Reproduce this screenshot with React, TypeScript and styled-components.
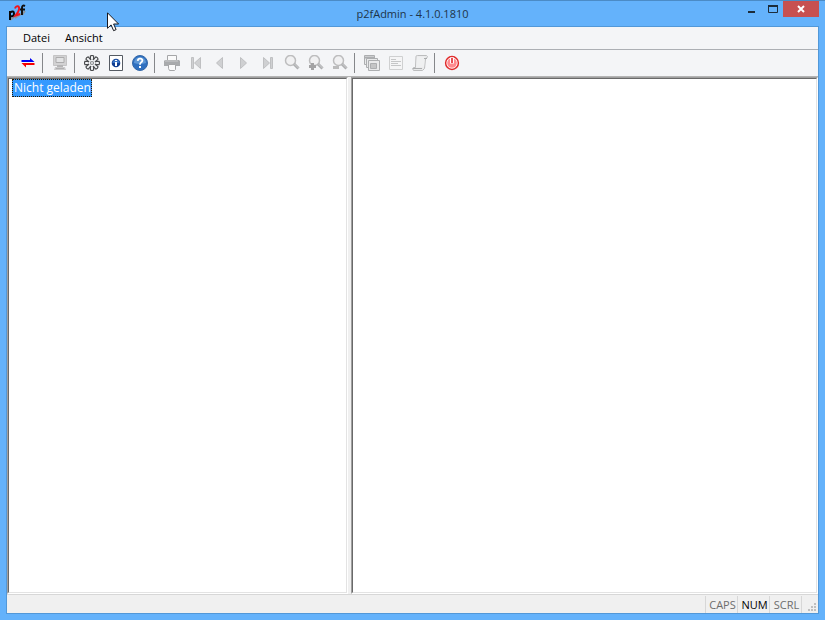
import React, { useState } from "react";
import styled, { createGlobalStyle } from "styled-components";

const GlobalStyle = createGlobalStyle`
  * { box-sizing: border-box; }
  html, body, #root { height: 100%; margin: 0; }
  body { font: 11px/16px "Open Sans", "Noto Sans", sans-serif; color: #000; overflow: hidden; }
  button { font: inherit; color: inherit; background: none; border: 0; padding: 0; margin: 0; }
  svg { display: block; }
`;

const Window = styled.div`
  height: 100vh;
  display: flex;
  flex-direction: column;
  background: #64b2fb;
  border-top: 1px solid #4b8bc6;
  padding: 0 6px 6px;
`;

const TitleBar = styled.header`
  flex: none;
  height: 25px;
  display: grid;
  grid-template-columns: 1fr auto 1fr;
  align-items: start;
`;

const Title = styled.h1`
  margin: 0;
  padding-top: 5px;
  font-size: 11px;
  line-height: 16px;
  font-weight: 400;
  color: #1e3448;
`;

const Logo = styled.svg`
  margin: 2px 0 0;
`;

const WindowButtons = styled.div`
  justify-self: end;
  display: flex;
`;

const WindowButton = styled.button<{ $close?: boolean }>`
  width: ${(p) => (p.$close ? 36 : 21)}px;
  height: 16px;
  display: grid;
  place-items: center;
  background: ${(p) => (p.$close ? "#c75050" : "transparent")};
`;

const Client = styled.main`
  flex: 1;
  min-height: 0;
  display: flex;
  flex-direction: column;
  background: #f4f5f7;
  border: 1px solid #5298d8;
`;

const MenuBar = styled.nav`
  flex: none;
  height: 23px;
  display: flex;
  align-items: center;
  padding: 0 8px;
  border-bottom: 1px solid #acafb4;
`;

const MenuItem = styled.button`
  padding: 0 7px 0 8px;
`;

const ToolBar = styled.div`
  flex: none;
  height: 26px;
  display: flex;
  align-items: center;
  padding: 0 9px;
`;

const ToolButton = styled.button`
  flex: none;
  width: 24px;
  height: 24px;
  display: grid;
  place-items: center;
`;

const Separator = styled.span`
  flex: none;
  width: 8px;
  height: 20px;
  &::before {
    content: "";
    display: block;
    width: 1px;
    height: 100%;
    margin-left: 2px;
    background: #85878a;
  }
`;

const Panes = styled.div`
  flex: 1;
  min-height: 0;
  display: grid;
  grid-template-columns: 341fr 467fr;
  column-gap: 3px;
  background: #f0f0f0;
  border-top: 1px solid #b4b4b4;
`;

const Pane = styled.section`
  min-width: 0;
  background: #fff;
  border: 1px solid;
  border-color: #a0a0a0 #fff #fff #a0a0a0;
`;

const PaneBody = styled.div`
  height: 100%;
  padding: 0 3px;
  border: 1px solid;
  border-color: #696969 #e3e3e3 #e3e3e3 #696969;
`;

const TreeItem = styled.button`
  display: block;
  height: 18px;
  padding: 0 0 0 1px;
  color: #fff;
  background: #3399ff;
  border: 1px dotted #2a1a00;
  font-size: 12px;
  line-height: 16px;
`;

const StatusBar = styled.footer`
  flex: none;
  height: 19px;
  display: flex;
  justify-content: flex-end;
  background: #f0f0f0;
  border-top: 1px solid #d7d7d7;
`;

const Indicator = styled.span<{ $on?: boolean }>`
  width: 32px;
  margin-top: 1px;
  padding: 1px 0 0 2px;
  border-left: 1px solid #d7d7d7;
  text-align: center;
  color: ${(p) => (p.$on ? "#000" : "#6d6d6d")};
`;

const Grip = styled.svg`
  border-left: 1px solid #d7d7d7;
  margin-top: 1px;
`;

const Pointer = styled.svg`
  position: absolute;
  left: 107px;
  top: 12px;
  pointer-events: none;
`;

const Magnifier = ({ mark }: { mark?: "plus" | "minus" }) => (
  <>
    <circle cx="6.5" cy="5.5" r="5" fill="#f1f1f2" stroke="#bdbdbe" strokeWidth="1.5" />
    <path d="M10 9l4.500 4.500" stroke="#adaeb0" strokeWidth="3" />
    <path d="M10.500 9l4 4" stroke="#cfcfd0" />
    {mark === "plus" && <path d="M1 11.500h7M4.500 8v7" stroke="#a3a3a4" strokeWidth="3" />}
    {mark === "minus" && <path d="M1 12.500h6" stroke="#bbb" strokeWidth="3" />}
  </>
);

const icons: Record<string, React.ReactNode> = {
  connect: (
    <>
      <path d="M1.500 5H10V3l4.500 4h-13z" fill="#0000f4" />
      <path d="M14.500 8h-13L6 12.500V10h8.500z" fill="#f40000" />
    </>
  ),
  computer: (
    <>
      <path d="M1.500 0.500h13v10h-13z" fill="#d2d2d3" stroke="#c4c4c5" />
      <path d="M4 2.500h8v5H4z" fill="#e2e3e4" stroke="#acacad" />
      <path d="M5 10h6v2H5z" fill="#b5b5b6" />
      <path d="M3 12h10l1 3H2z" fill="#cacacb" />
      <path d="M4 13.500h8" stroke="#b0b0b1" />
    </>
  ),
  gear: (
    <g fill="none" stroke="#4a4c4e" strokeWidth="1.200">
      {[0, 45, 90, 135, 180, 225, 270, 315].map((a) => (
        <path key={a} transform={`rotate(${a} 8 8)`} d="M6.900 5L6.400 3.600V1Q8 0 9.600 1V3.600L9.100 5" />
      ))}
      <circle cx="8" cy="8" r="1.500" stroke="#8a8c8e" />
    </g>
  ),
  info: (
    <>
      <path d="M1.500 0.500h13v15h-13z" fill="#fff" stroke="#555b63" />
      <circle cx="8" cy="8" r="4.300" fill="#123f91" />
      <path d="M4.500 8a3.500 3.500 0 0 1 7 0" fill="#3b75c5" />
      <path d="M7 5h2v1H7zM7 7h2v4H7z" fill="#fff" />
    </>
  ),
  help: (
    <>
      <circle cx="8" cy="8" r="7.500" fill="#2f70c0" stroke="#3468a8" />
      <path d="M2 8a6 6 0 0 1 12 0Q8 10 2 8" fill="#5f98d6" />
      <path d="M5.700 5.800Q6 3.500 8.200 3.600Q10.500 3.800 10.400 5.700Q10.200 6.800 8.800 7.600Q8 8.200 8 9.700" fill="none" stroke="#fff" strokeWidth="1.800" />
      <path d="M7 11h2v2H7z" fill="#fff" />
    </>
  ),
  print: (
    <>
      <path d="M3.500 5.500v-5h9v5" fill="#fafafa" stroke="#a5a6a8" />
      <path d="M1 5h14l1 1v5H0V6z" fill="#a8aaac" />
      <path d="M1 6h13" stroke="#c9cacb" />
      <path d="M4.500 9.500h7v5l-1 1h-5l-1-2z" fill="#fafafa" stroke="#a5a6a8" />
    </>
  ),
  first: <path d="M3.500 2.500h2v11h-2zM12.500 2.500v11L6.500 8z" fill="#cfd0d2" stroke="#bfc0c2" />,
  previous: <path d="M10.500 2.500v11L4.500 8z" fill="#cfd0d2" stroke="#bfc0c2" />,
  next: <path d="M4.500 2.500v11l6-5.500z" fill="#cfd0d2" stroke="#bfc0c2" />,
  last: <path d="M3.500 2.500v11L9.500 8zM10.500 2.500h2v11h-2z" fill="#cfd0d2" stroke="#bfc0c2" />,
  find: <Magnifier />,
  zoomIn: <Magnifier mark="plus" />,
  zoomOut: <Magnifier mark="minus" />,
  cascade: (
    <g fill="#e9eaeb" stroke="#acaeb0">
      <path d="M0.500 0.500h10v9h-10z" />
      <path d="M1 2.500h9" strokeWidth="2" />
      <path d="M2.500 3.500h11v9h-11z" />
      <path d="M4.500 5.500h11v10h-11z" />
      <path d="M6.500 8.500h6v5h-6z" fill="#c4c5c6" />
    </g>
  ),
  list: (
    <>
      <path d="M1.500 1.500h13v13h-13z" fill="#f5f5f6" stroke="#cfd0d1" />
      <path d="M3 4.500h5M3 6.500h10M3 8.500h7M3 10.500h10" stroke="#c5c6c7" />
    </>
  ),
  script: (
    <>
      <path d="M4 1.500Q4 0.500 5.500 0.500h9l1 1-1 2h-1l-1 10-2 2h-9l-1-2 1-1h2z" fill="#e8e9ea" stroke="#bcbdbe" />
      <path d="M5 1.500h8l-1 11H4z" fill="#eff0f1" />
      <path d="M12 3.500h3M1 13.500h9" stroke="#abadae" />
    </>
  ),
  power: (
    <>
      <circle cx="8" cy="8" r="6.400" fill="#fff" stroke="#e02b2b" strokeWidth="1.500" />
      <circle cx="8" cy="8" r="4.800" fill="#ff8a8e" />
      <path d="M8 2.500v6" stroke="#fff" strokeWidth="4" />
      <path d="M8 3v5" stroke="#e85055" strokeWidth="2" />
    </>
  ),
};

const groups: { icon: string; label: string; disabled?: boolean }[][] = [
  [{ icon: "connect", label: "Verbinden" }],
  [{ icon: "computer", label: "Computer", disabled: true }],
  [
    { icon: "gear", label: "Einstellungen" },
    { icon: "info", label: "Info" },
    { icon: "help", label: "Hilfe" },
  ],
  [
    { icon: "print", label: "Drucken", disabled: true },
    { icon: "first", label: "Erste Seite", disabled: true },
    { icon: "previous", label: "Vorherige Seite", disabled: true },
    { icon: "next", label: "Nächste Seite", disabled: true },
    { icon: "last", label: "Letzte Seite", disabled: true },
    { icon: "find", label: "Suchen", disabled: true },
    { icon: "zoomIn", label: "Vergrößern", disabled: true },
    { icon: "zoomOut", label: "Verkleinern", disabled: true },
  ],
  [
    { icon: "cascade", label: "Fenster", disabled: true },
    { icon: "list", label: "Liste", disabled: true },
    { icon: "script", label: "Protokoll", disabled: true },
  ],
  [{ icon: "power", label: "Beenden" }],
];

export default function App() {
  const [selected, setSelected] = useState(true);
  return (
    <Window>
      <GlobalStyle />
      <TitleBar>
        <Logo width="20" height="20" viewBox="0 0 20 20" aria-hidden="true">
          <g fill="none" transform="translate(1 1)" stroke="#8b959e" strokeWidth="2">
            <path d="M3 16l4-3M8 14l6-4M15 11l3-4" />
          </g>
          <path d="M4 8v9M4 9.500Q8 7 8 10.500Q8 14 4 13" fill="none" stroke="#080808" strokeWidth="2" />
          <path d="M9 5.500Q10 2.500 12.500 3.500Q14 5 12 9L9.500 12.500L14 11" fill="none" stroke="#f31318" strokeWidth="2" />
          <path d="M19 3Q16 1.500 16 5v7M14 6.500h5" fill="none" stroke="#111" strokeWidth="2" />
        </Logo>
        <Title>p2fAdmin - 4.1.0.1810</Title>
        <WindowButtons>
          <WindowButton aria-label="Minimieren">
            <svg width="7" height="10"><path d="M0 8h7" stroke="#1c2c3a" strokeWidth="2" /></svg>
          </WindowButton>
          <WindowButton aria-label="Maximieren">
            <svg width="10" height="8"><path d="M0.500 1v6.500h9V1" fill="none" stroke="#1c2c3a" /><path d="M0 1h10" stroke="#1c2c3a" strokeWidth="2" /></svg>
          </WindowButton>
          <WindowButton $close aria-label="Schließen">
            <svg width="8" height="8"><path d="M1 1l6 6M7 1L1 7" stroke="#fff" strokeWidth="2" /></svg>
          </WindowButton>
        </WindowButtons>
      </TitleBar>
      <Client>
        <MenuBar>
          <MenuItem>Datei</MenuItem>
          <MenuItem>Ansicht</MenuItem>
        </MenuBar>
        <ToolBar role="toolbar">
          {groups.map((group, i) => (
            <React.Fragment key={i}>
              {i > 0 && <Separator />}
              {group.map((t) => (
                <ToolButton key={t.icon} aria-label={t.label} disabled={t.disabled}>
                  <svg width="16" height="16" viewBox="0 0 16 16">{icons[t.icon]}</svg>
                </ToolButton>
              ))}
            </React.Fragment>
          ))}
        </ToolBar>
        <Panes>
          <Pane>
            <PaneBody>
              <TreeItem aria-pressed={selected} onClick={() => setSelected(true)}>Nicht geladen</TreeItem>
            </PaneBody>
          </Pane>
          <Pane>
            <PaneBody />
          </Pane>
        </Panes>
        <StatusBar>
          <Indicator>CAPS</Indicator>
          <Indicator $on>NUM</Indicator>
          <Indicator>SCRL</Indicator>
          <Grip width="17" height="17" viewBox="0 0 16 17" aria-hidden="true">
            <path d="M12 7h2v2h-2zM9 10h2v2H9zM12 10h2v2h-2zM6 13h2v2H6zM9 13h2v2H9zM12 13h2v2h-2z" fill="#bfbfbf" />
          </Grip>
        </StatusBar>
      </Client>
      <Pointer width="13" height="20" viewBox="0 0 13 20" aria-hidden="true">
        <path d="M0.500 0.800v15.500l3.600-3.400 2.500 5.800 2.500-1.100-2.500-5.600h5z" fill="#fff" stroke="#18191f" />
      </Pointer>
    </Window>
  );
}
